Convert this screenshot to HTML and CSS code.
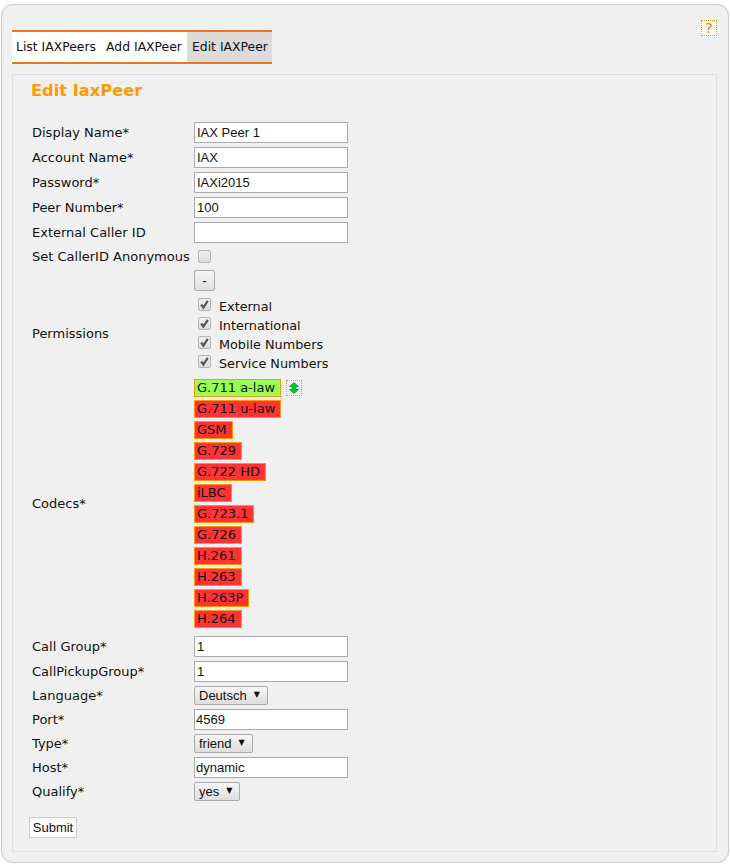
FILE: index.html
```html
<!DOCTYPE html>
<html lang="en">
<head>
<meta charset="utf-8">
<title>Edit IaxPeer</title>
<link rel="stylesheet" href="styles.css">
</head>
<body>
<div class="panel">
  <div class="help-row"><span class="help">?</span></div>
  <nav class="tabs">
    <a class="tab">List IAXPeers</a>
    <a class="tab">Add IAXPeer</a>
    <a class="tab active">Edit IAXPeer</a>
  </nav>
  <form class="box">
    <h1 class="title">Edit IaxPeer</h1>
    <div class="form">
      <div class="row"><label>Display Name*</label><input class="text" value="IAX Peer 1"></div>
      <div class="row"><label>Account Name*</label><input class="text" value="IAX"></div>
      <div class="row"><label>Password*</label><input class="text" value="IAXi2015"></div>
      <div class="row"><label>Peer Number*</label><input class="text" value="100"></div>
      <div class="row"><label>External Caller ID</label><input class="text" value=""></div>
      <div class="row row-check"><label>Set CallerID Anonymous</label><span class="check"></span></div>
      <div class="row row-perm">
        <label>Permissions</label>
        <div class="perm">
          <button type="button" class="minus">-</button>
          <ul class="perm-list">
            <li><span class="check on"><svg viewBox="0 0 13 13" width="13" height="13"><path d="M3.200 6.500 5.400 9.600 9.800 2.800" fill="none" stroke="#555" stroke-width="2.200"/></svg></span>External</li>
            <li><span class="check on"><svg viewBox="0 0 13 13" width="13" height="13"><path d="M3.200 6.500 5.400 9.600 9.800 2.800" fill="none" stroke="#555" stroke-width="2.200"/></svg></span>International</li>
            <li><span class="check on"><svg viewBox="0 0 13 13" width="13" height="13"><path d="M3.200 6.500 5.400 9.600 9.800 2.800" fill="none" stroke="#555" stroke-width="2.200"/></svg></span>Mobile Numbers</li>
            <li><span class="check on"><svg viewBox="0 0 13 13" width="13" height="13"><path d="M3.200 6.500 5.400 9.600 9.800 2.800" fill="none" stroke="#555" stroke-width="2.200"/></svg></span>Service Numbers</li>
          </ul>
        </div>
      </div>
      <div class="row row-codecs">
        <label>Codecs*</label>
        <ul class="codecs">
          <li><span class="codec green">G.711 a-law</span><span class="sort"><svg viewBox="0 0 10 12" width="10" height="12"><path d="M5 .5 9.500 4.500H7V7.500H9.500L5 11.500 .5 7.500H3V4.500H.5Z" fill="#0c2" stroke="#083" stroke-width=".7"/></svg></span></li>
          <li><span class="codec">G.711 u-law</span></li>
          <li><span class="codec">GSM</span></li>
          <li><span class="codec">G.729</span></li>
          <li><span class="codec">G.722 HD</span></li>
          <li><span class="codec">iLBC</span></li>
          <li><span class="codec">G.723.1</span></li>
          <li><span class="codec">G.726</span></li>
          <li><span class="codec">H.261</span></li>
          <li><span class="codec">H.263</span></li>
          <li><span class="codec">H.263P</span></li>
          <li><span class="codec">H.264</span></li>
        </ul>
      </div>
      <div class="row"><label>Call Group*</label><input class="text" value="1"></div>
      <div class="row"><label>CallPickupGroup*</label><input class="text" value="1"></div>
      <div class="row row-sel"><label>Language*</label><span class="select">Deutsch<i>▼</i></span></div>
      <div class="row"><label>Port*</label><input class="text tight" value="4569"></div>
      <div class="row row-sel"><label>Type*</label><span class="select">friend<i>▼</i></span></div>
      <div class="row"><label>Host*</label><input class="text tight" value="dynamic"></div>
      <div class="row row-sel"><label>Qualify*</label><span class="select">yes<i>▼</i></span></div>
    </div>
    <button type="button" class="submit">Submit</button>
  </form>
</div>
</body>
</html>
```
FILE: styles.css
```css
* { box-sizing: border-box; }
html, body { margin: 0; padding: 0; background: #fff; }
body { padding: 4px 1px 3px 1px; font: 13px "DejaVu Sans", sans-serif; color: #111; }
.panel {
  height: 859px;
  background: #f0f0f0;
  border: 1px solid #ccc;
  border-radius: 12px;
  padding: 0 11px 0 10px;
  box-shadow: 0 0 1px #ddd;
}
.help-row { display: flex; justify-content: flex-end; height: 25px; padding-top: 15px; }
.help {
  width: 16px; height: 16px;
  border: 1px dotted #f90;
  background: #fbfbef;
  color: #e87820;
  font: 14px/14px "DejaVu Sans", sans-serif;
  text-align: center;
}
.tabs {
  display: flex;
  width: 260px;
  height: 34px;
  background: #fff;
  border-top: 2px solid #e8761e;
  border-bottom: 2px solid #e8761e;
}
.tab { padding: 0 5px; line-height: 30px; font-size: 12.400px; color: #111; white-space: nowrap; }
.tab:first-child { padding-left: 4px; }
.tab.active { background: #dddada; flex: 1; min-width: 0; padding-right: 0; }
.box {
  display: block;
  height: 778px;
  margin-top: 10px;
  border: 1px solid #ddd;
  padding: 0 0 0 16px;
}
.title { margin: 6px 0 0 2px; font: bold 16.300px/20px "DejaVu Sans", sans-serif; color: #f90; height: 20px; }
.form { margin-top: 21px; }
.row { display: flex; align-items: flex-start; height: 25px; padding-left: 3px; }
.row > label { width: 162px; flex: none; line-height: 21px; }
.text {
  display: block;
  width: 154px; height: 21px;
  padding: 0 2px;
  border: 1px solid #aaa;
  background: #fff;
  font: 13px "Liberation Sans", sans-serif;
  color: #111;
  outline: none;
}
.text.tight { padding: 0 1px; }
.row-check { height: 19px; }
.row-check > label { line-height: 19px; }
.check {
  display: inline-block; flex: none;
  width: 13px; height: 13px;
  margin: 3px 0 0 4px;
  border: 1px solid #b4b4b4;
  border-radius: 2px;
  background: linear-gradient(#f0f0f0, #dcdcdc);
  position: relative;
}
.check svg { position: absolute; left: -1px; top: -1px; }
.row-perm { height: 112px; padding-top: 4px; }
.row-perm > label { margin-top: 53px; }
.minus {
  display: block;
  width: 21px; height: 21px; padding: 0;
  border: 1px solid #aaa; border-radius: 2px;
  background: linear-gradient(#f6f6f6, #dedede);
  font: 13px "Liberation Sans", sans-serif; color: #111;
}
.perm-list { list-style: none; margin: 6px 0 0; padding: 0; font-size: 12.800px; }
.perm-list li { display: flex; align-items: center; height: 19px; }
.perm-list .check { margin: -4px 8px 0 4px; }
.row-codecs { height: 258px; }
.row-codecs > label { margin-top: 115px; }
.codecs { list-style: none; margin: 0; padding: 0; }
.codecs li { display: flex; align-items: flex-start; height: 21px; padding-top: 1px; }
.codec {
  height: 18px;
  padding: 0 5px 0 2px;
  border: 1px solid #f90;
  background: #f33;
  font: 13px/16px "DejaVu Sans", sans-serif;
  color: #111;
  white-space: nowrap;
}
.codec.green { background: #9f5; }
.sort {
  width: 16px; height: 16px; margin: 1px 0 0 5px;
  border: 1px dotted #f90;
  display: flex; align-items: center; justify-content: center;
}
.select {
  display: flex; align-items: center;
  height: 19px;
  padding: 0 0 0 4px;
  border: 1px solid #aaa; border-radius: 2px;
  background: linear-gradient(#f6f6f6, #dedede);
  font: 13px "Liberation Sans", sans-serif; color: #111;
}
.select i { font: normal 8px "DejaVu Sans", sans-serif; margin: -3px 7px 0 7px; }
.row-sel { height: 23px; }
.row-sel > label { line-height: 19px; }
.submit {
  display: block;
  width: 48px; height: 21px; padding: 0;
  margin: 12px 0 0;
  border: 1px solid #ccc;
  background: #fff;
  font: 13px "Liberation Sans", sans-serif; color: #111;
}
```
